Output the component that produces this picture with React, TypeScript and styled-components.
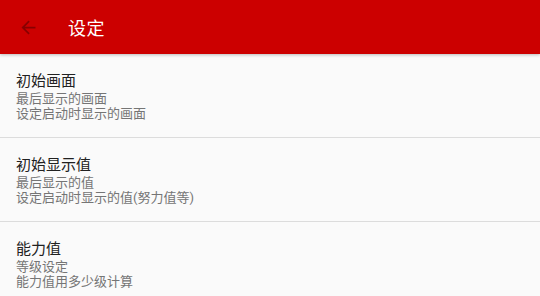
import React from 'react'
import styled, { createGlobalStyle } from 'styled-components'

const GlobalStyle = createGlobalStyle`
  html, body {
    margin: 0;
    padding: 0;
    background: #fafafa;
  }
  body {
    font-family: Roboto, 'Noto Sans CJK SC', 'Noto Sans', sans-serif;
  }
`

const Page = styled.div`
  width: 540px;
  height: 296px;
  overflow: hidden;
  background: #fafafa;
  display: flex;
  flex-direction: column;
`

const Toolbar = styled.header`
  height: 54px;
  flex-shrink: 0;
  background: #cc0000;
  display: flex;
  align-items: center;
  padding-left: 16px;
  box-shadow: 0 1px 3px rgba(0, 0, 0, 0.25);
  position: relative;
  z-index: 1;
`

const BackButton = styled.button`
  width: 24px;
  height: 24px;
  padding: 0;
  border: 0;
  background: none;
  display: flex;
  align-items: center;
  justify-content: center;
  color: #880000;
`

const Title = styled.h1`
  margin: 0 0 0 28px;
  font-size: 18px;
  font-weight: 400;
  color: #fff;
  letter-spacing: 0.5px;
`

const List = styled.div`
  display: flex;
  flex-direction: column;
`

const Row = styled.div`
  height: 84px;
  padding: 17px 16px 0;
  box-sizing: border-box;
  border-bottom: 1px solid #dcdcdc;
  display: flex;
  flex-direction: column;
`

const RowTitle = styled.div`
  font-size: 15px;
  line-height: 20px;
  color: #212121;
  margin-bottom: 0;
`

const RowText = styled.div`
  font-size: 13px;
  line-height: 15px;
  color: #757575;
`

const settings = [
  { title: '初始画面', lines: ['最后显示的画面', '设定启动时显示的画面'] },
  { title: '初始显示值', lines: ['最后显示的值', '设定启动时显示的值(努力值等)'] },
  { title: '能力值', lines: ['等级设定', '能力值用多少级计算'] },
]

function App() {
  return (
    <Page>
      <GlobalStyle />
      <Toolbar>
        <BackButton aria-label="back">
          <svg width="21" height="21" viewBox="0 0 24 24" fill="currentColor">
            <path d="M20 11H7.83l5.59-5.59L12 4l-8 8 8 8 1.41-1.41L7.83 13H20v-2z" />
          </svg>
        </BackButton>
        <Title>设定</Title>
      </Toolbar>
      <List>
        {settings.map((s) => (
          <Row key={s.title}>
            <RowTitle>{s.title}</RowTitle>
            {s.lines.map((l) => (
              <RowText key={l}>{l}</RowText>
            ))}
          </Row>
        ))}
      </List>
    </Page>
  )
}

export default App
